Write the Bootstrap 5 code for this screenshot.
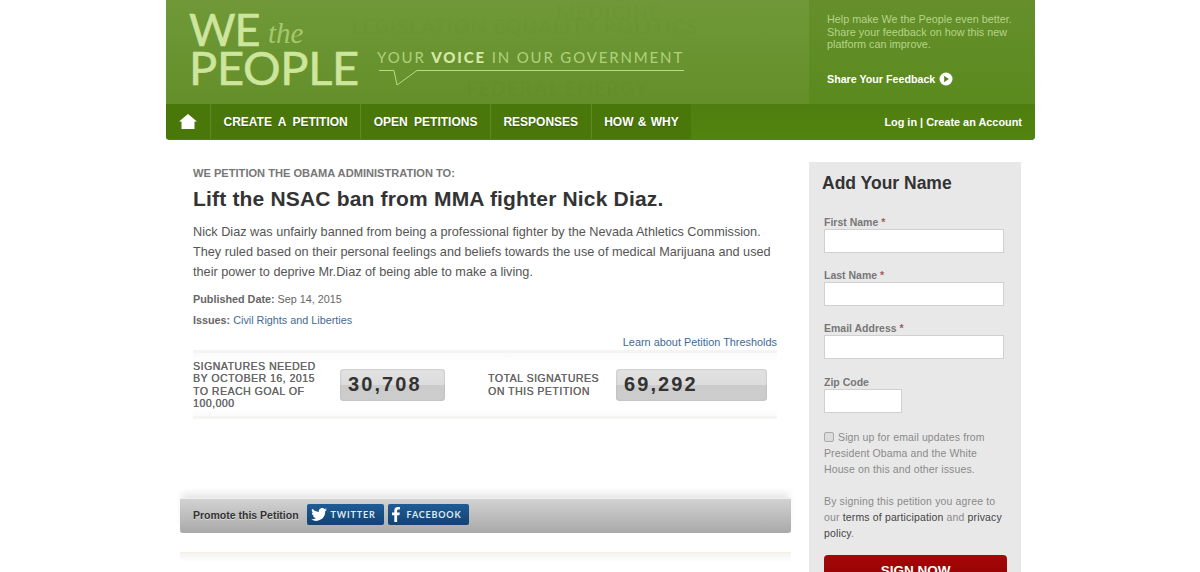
<!DOCTYPE html>
<html lang="en">
<head>
<meta charset="utf-8">
<title>We the People</title>
<link rel="stylesheet" href="https://cdn.jsdelivr.net/npm/bootstrap@5.3.0/dist/css/bootstrap.min.css">
<style>
html,body{height:572px;overflow:hidden}
body{background:#fff;font-family:"Liberation Sans",Arial,sans-serif;color:#555;font-size:12px}
.wt-page{width:869px;margin-left:166px}
.wt-banner{height:140px;border-radius:0 0 4px 4px;overflow:hidden;background:linear-gradient(#709838,#5f8c24);position:relative}
.wt-top{height:104px}
.wt-watermark{position:absolute;left:0;top:0;width:643px;height:104px;overflow:hidden;color:rgba(80,120,30,.08);font:700 20px/24px "Lato",sans-serif;white-space:nowrap;letter-spacing:1px}
.wt-watermark span{position:absolute}
.wt-logo{position:relative;width:643px;flex:none;color:#cde59c;font-family:"Lato",sans-serif}
.wt-we{position:absolute;left:23px;top:4px;font-size:45px;line-height:50px;font-weight:400;letter-spacing:-1px;-webkit-text-stroke:.6px #cde59c}
.wt-the{position:absolute;left:102px;top:17px;font:italic 29px/32px "Liberation Serif",serif;color:#a5c86e}
.wt-people{position:absolute;left:23px;top:40px;font-size:47px;line-height:54px;letter-spacing:-.3px;-webkit-text-stroke:.6px #cde59c}
.wt-slogan{position:absolute;left:211px;top:47px;font-size:15px;line-height:20px;letter-spacing:1.85px;color:#b0d17e;white-space:nowrap}
.wt-slogan b{color:#d4eaa6;font-weight:900}
.wt-rule{position:absolute;left:213px;top:69px}
.wt-feedback{width:226px;padding:13px 0 0 18px;background:linear-gradient(#668f2c,#5a8a1e);color:#b6d488;font-size:10.8px;line-height:12.5px}
.wt-share{color:#fff;font-weight:700;margin-top:21px;font-size:10.7px;line-height:14px}
.wt-nav{height:36px;background:linear-gradient(#4f7e10,#52840f)}
.wt-nav .nav-link{color:#fff;font-size:12px;font-weight:700;word-spacing:3px;padding:0 12.5px;height:35px;line-height:37px;border-left:1px solid #5d8a22;text-shadow:0 1px 1px #36590a;white-space:nowrap}
.wt-nav .nav-link.wt-tight{word-spacing:1px}
.wt-nav .nav{background:#497709;height:35px;width:525px}
.wt-nav .nav-link.wt-home{width:44px;border-left:0;padding:0;display:flex;align-items:center;justify-content:center}
.wt-account{color:#fff;font-weight:700;font-size:10.9px;padding-right:13px;line-height:37px}
.wt-account a{color:#fff;text-decoration:none}
.wt-main{width:611px;margin-left:14px;flex:none}
.wt-kicker{font-size:11.1px;font-weight:700;color:#777;margin:0;padding:27px 0 0 13px;line-height:13px}
.wt-title{font-size:21px;font-weight:700;color:#333;margin:6px 0 0 13px;line-height:26px;letter-spacing:.18px}
.wt-copy{margin:10px 0 0 13px;font-size:12.7px;line-height:20px;color:#555;width:590px}
.wt-meta{margin:7px 0 0 13px;font-size:10.8px;line-height:21px;color:#666}
.wt-meta b{color:#666}
.wt-meta a,.wt-learn a{color:#3f6a94;text-decoration:none}
.wt-learn{font-size:10.9px;text-align:right;line-height:13px;margin:5px 14px 0 0}
.wt-stats{margin:1px 14px 0 13px;height:69px;border-top:3px solid #f4f4f2;border-bottom:3px solid #f4f4f2;background:linear-gradient(#fafafa,#fff 15%,#fff 90%,#fafafa)}
.wt-stat-label{font-size:10.5px;line-height:12.5px;letter-spacing:.5px;color:#666;text-shadow:.3px 0 0 #666;width:130px;margin-right:17px;flex:none}
.wt-stat-total{width:128px;margin:0;margin-left:auto}
.wt-counter{height:32px;border-radius:4px;background:linear-gradient(#e2e2e2,#dcdcdc 50%,#cbcbcb 50%,#cdcdcd);box-shadow:inset 0 0 2px #aaa;color:#333;font-size:20px;font-weight:700;letter-spacing:2.1px;line-height:30px;padding-left:8px;flex:none}
.wt-c1{width:105px}
.wt-c2{width:151px;margin-right:10px}
.wt-promote{height:35px;margin-top:79px;padding-left:13px;border-radius:0 0 3px 3px;background:linear-gradient(#d2d2d2,#a9a9a9);border-top:1px solid #eee;box-shadow:0 -7px 7px -2px #e8e8e8;color:#333;font-size:10.5px;font-weight:700}
.wt-promote>span{margin-right:8px;text-shadow:0 1px 0 #ddd}
.wt-social{height:21px;background:linear-gradient(#1f5c96,#124372);border-radius:2px;color:#dfe9f3;font:700 9px/21px "Lato",sans-serif;letter-spacing:.8px;padding:0 0 0 4px;margin:-3px 4px 0 0;border:0;display:flex;align-items:center;gap:4px}
.wt-tw{width:77px}
.wt-fb{width:81px;gap:7px}
.wt-divider{height:10px;margin-top:19px;border-top:1px solid #f4f0dc;background:linear-gradient(#f3f3f3,#fff)}
.wt-side{width:212px;flex:none;margin:22px 0 0 18px;background:#e8e8e8;padding:11px 17px 0 15px;height:500px}
.wt-side h2{font-size:17.5px;font-weight:700;color:#333;margin:0 0 22px -2px;line-height:20px}
.wt-field{margin-bottom:15px}
.wt-field .form-label{font-size:10.5px;font-weight:700;color:#777;margin:0;line-height:14px;display:block}
.wt-field .form-label i{font-style:normal;color:#a35a5a}
.wt-field .form-control{width:180px;height:24px;border-radius:0;border:1px solid #d0d0d0;padding:0 4px}
.wt-field .wt-zip{width:78px}
.wt-field-last{margin-top:16px}
.wt-signup{display:block;font-size:10.5px;line-height:16px;color:#8a8a8a;margin:16px 0 0;letter-spacing:.12px;width:180px}
.wt-signup input{appearance:none;display:inline-block;width:10px;height:10px;margin:0 1px 0 0;vertical-align:-1px;background:#dcdcdc;border:1px solid #aaa;border-radius:2px}
.wt-terms{font-size:10.5px;line-height:16px;color:#8a8a8a;margin:16px 0 0;width:180px;letter-spacing:.15px}
.wt-terms a{color:#444;text-decoration:none}
.wt-sign{display:block;width:183px;margin-top:14px;background:linear-gradient(#a60707,#8b0000);border:0;border-radius:4px;color:#fff;font-size:13.5px;font-weight:700;padding:8px 0 14px;text-align:center;line-height:16px}
</style>
</head>
<body>
<div class="wt-page">
  <header class="wt-banner">
    <div class="wt-watermark">
      <span style="left:390px;top:0">MEDICINE</span>
      <span style="left:185px;top:14px">LEGISLATION EQUALITY POLITICS</span>
      <span style="left:300px;top:76px">FEDERAL ENERGY</span>
    </div>
    <div class="wt-top d-flex position-relative">
      <div class="wt-logo">
        <div class="wt-we">WE</div>
        <div class="wt-the">the</div>
        <div class="wt-people">PEOPLE</div>
        <div class="wt-slogan">YOUR <b>VOICE</b> IN OUR GOVERNMENT</div>
        <svg class="wt-rule" width="306" height="20" viewBox="0 0 306 20" aria-hidden="true"><path d="M0 1.500H15L18 16L38 1.500H305" fill="none" stroke="#b9d98a" stroke-width="1"/></svg>
      </div>
      <div class="wt-feedback flex-grow-1">
        <div>Help make We the People even better.<br>Share your feedback on how this new<br>platform can improve.</div>
        <div class="wt-share d-flex align-items-center gap-1">Share Your Feedback
          <svg width="14" height="14" viewBox="0 0 14 14" aria-hidden="true"><circle cx="7" cy="7" r="6.5" fill="#fff"/><path d="M5.200 3.800L9.800 7L5.200 10.200Z" fill="#55801c"/></svg>
        </div>
      </div>
    </div>
    <nav class="wt-nav d-flex justify-content-between position-relative">
      <ul class="nav flex-nowrap">
        <li class="nav-item"><a class="nav-link wt-home" href="#" aria-label="Home">
          <svg width="18" height="15" viewBox="0 0 18 15" aria-hidden="true"><path d="M9 0L18 7.500H15.500V15H2.500V7.500H0Z" fill="#fff"/></svg></a></li>
        <li class="nav-item"><a class="nav-link" href="#">CREATE A PETITION</a></li>
        <li class="nav-item"><a class="nav-link" href="#">OPEN PETITIONS</a></li>
        <li class="nav-item"><a class="nav-link" href="#">RESPONSES</a></li>
        <li class="nav-item"><a class="nav-link wt-tight" href="#">HOW &amp; WHY</a></li>
      </ul>
      <div class="wt-account"><a href="#">Log in</a> | <a href="#">Create an Account</a></div>
    </nav>
  </header>
  <div class="d-flex">
    <main class="wt-main">
      <p class="wt-kicker">WE PETITION THE OBAMA ADMINISTRATION TO:</p>
      <h1 class="wt-title">Lift the NSAC ban from MMA fighter Nick Diaz.</h1>
      <p class="wt-copy">Nick Diaz was unfairly banned from being a professional fighter by the Nevada Athletics Commission. They ruled based on their personal feelings and beliefs towards the use of medical Marijuana and used their power to deprive Mr.Diaz of being able to make a living.</p>
      <div class="wt-meta"><div><b>Published Date:</b> Sep 14, 2015</div><div><b>Issues:</b> <a href="#">Civil Rights and Liberties</a></div></div>
      <div class="wt-learn"><a href="#">Learn about Petition Thresholds</a></div>
      <section class="wt-stats d-flex align-items-center">
        <div class="wt-stat-label">SIGNATURES NEEDED BY OCTOBER 16, 2015 TO REACH GOAL OF 100,000</div>
        <div class="wt-counter wt-c1">30,708</div>
        <div class="wt-stat-label wt-stat-total">TOTAL SIGNATURES ON THIS PETITION</div>
        <div class="wt-counter wt-c2">69,292</div>
      </section>
      <div class="wt-promote d-flex align-items-center">
        <span>Promote this Petition</span>
        <button class="wt-social wt-tw" type="button"><svg width="16" height="13" viewBox="0 0 24 20" aria-hidden="true"><path d="M24 2.400a9.700 9.700 0 0 1-2.800.8 4.900 4.900 0 0 0 2.200-2.700 9.800 9.800 0 0 1-3.100 1.200A4.900 4.900 0 0 0 11.900 6.200 14 14 0 0 1 1.700 1a4.900 4.900 0 0 0 1.500 6.600 4.900 4.900 0 0 1-2.200-.6 4.900 4.900 0 0 0 3.900 4.900 4.900 4.900 0 0 1-2.200.1 4.900 4.900 0 0 0 4.600 3.400A9.900 9.900 0 0 1 0 17.400a13.900 13.900 0 0 0 21.500-12.400A10 10 0 0 0 24 2.400Z" fill="#fff"/></svg>TWITTER</button>
        <button class="wt-social wt-fb" type="button"><svg width="8" height="15" viewBox="0 0 8 15" aria-hidden="true"><path d="M2.300 15V8.300H0V5.600h2.300V3.600C2.300 1.300 3.700 0 5.800 0c1 0 1.800.1 2.100.1v2.400H6.500c-1.100 0-1.400.6-1.400 1.300v1.800h2.700l-.4 2.700H5.100V15Z" fill="#fff"/></svg>FACEBOOK</button>
      </div>
      <div class="wt-divider"></div>
    </main>
    <aside class="wt-side">
      <h2>Add Your Name</h2>
      <form>
        <div class="wt-field"><label class="form-label" for="fn">First Name <i>*</i></label><input class="form-control" id="fn" type="text"></div>
        <div class="wt-field"><label class="form-label" for="ln">Last Name <i>*</i></label><input class="form-control" id="ln" type="text"></div>
        <div class="wt-field"><label class="form-label" for="em">Email Address <i>*</i></label><input class="form-control" id="em" type="text"></div>
        <div class="wt-field wt-field-last"><label class="form-label" for="zp">Zip Code</label><input class="form-control wt-zip" id="zp" type="text"></div>
        <label class="wt-signup"><input type="checkbox"> Sign up for email updates from President Obama and the White House on this and other issues.</label>
        <p class="wt-terms">By signing this petition you agree to our <a href="#">terms of participation</a> and <a href="#">privacy policy</a>.</p>
        <button class="wt-sign" type="button">SIGN NOW</button>
      </form>
    </aside>
  </div>
</div>
<script src="https://cdn.jsdelivr.net/npm/bootstrap@5.3.0/dist/js/bootstrap.bundle.min.js"></script>
</body>
</html>
